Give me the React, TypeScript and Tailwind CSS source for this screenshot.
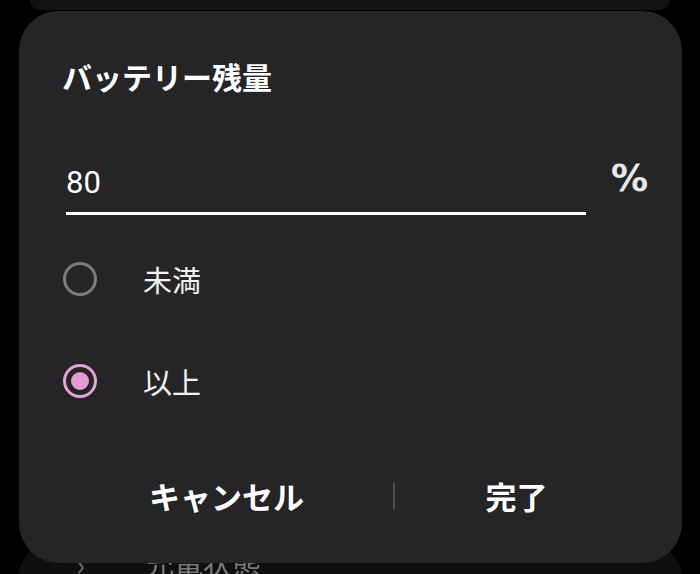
import React from "react";

const jp = { fontFamily: '"Noto Sans CJK JP", "Noto Sans", sans-serif' };

export default function App() {
  return (
    <div className="relative w-[700px] h-[574px] bg-black overflow-hidden" style={jp}>
      {/* background page content */}
      <div className="mx-[30px] h-[10px] rounded-b-[40px] bg-[#121212]" />
      <div className="mt-[530px] mx-[18px] h-[60px] rounded-t-[40px] bg-[#0f0f0f] flex items-start pl-[58px] pt-[8px] gap-[60px]">
        <span className="text-[#6b6b6b] text-[30px] leading-none">›</span>
        <span className="text-[#7a7a7a] text-[29px] leading-none">充電状態</span>
      </div>

      {/* dialog */}
      <div className="absolute left-[19px] top-[11px] w-[663px] h-[552px] rounded-[40px] bg-[#252527] flex flex-col pl-[44px] pr-[34px]">
        <div className="mt-[50px] -ml-[1px] text-white font-bold text-[30px] leading-none">
          バッテリー残量
        </div>

        <div className="mt-[76px] flex items-start">
          <div className="w-[522px] ml-[3px]">
            <div
              className="text-white text-[31px] leading-none pb-[14px]"
              style={{ fontFamily: 'Roboto, "Noto Sans", sans-serif' }}
            >
              80
            </div>
            <div className="h-[3px] bg-white" />
          </div>
          <div
            className="ml-[25px] -mt-[7px] text-[#e8e8e8] text-[37px] font-bold leading-none"
            style={{ fontFamily: '"DejaVu Sans", sans-serif' }}
          >
            %
          </div>
        </div>

        <div className="mt-[46px] flex items-center h-[36px]">
          <div className="w-[34px] h-[34px] rounded-full border-[3px] border-[#7c7c7c]" />
          <span className="ml-[46px] text-[#f2f2f2] text-[29px] leading-none">未満</span>
        </div>

        <div className="mt-[66px] flex items-center h-[36px]">
          <div className="w-[34px] h-[34px] rounded-full border-[3px] border-[#e6a2d9] flex items-center justify-center">
            <div className="w-[18px] h-[18px] rounded-full bg-[#e49ad4]" />
          </div>
          <span className="ml-[46px] text-[#f2f2f2] text-[29px] leading-none">以上</span>
        </div>

        <div className="mt-[81px] flex items-center -ml-[3px]">
          <div className="w-[333px] flex justify-center">
            <span className="text-white font-bold text-[31px] leading-none">キャンセル</span>
          </div>
          <div className="w-[2px] h-[28px] bg-[#4a4a4c]" />
          <div className="flex-1 flex justify-center pr-[10px]">
            <span className="text-white font-bold text-[31px] leading-none">完了</span>
          </div>
        </div>
      </div>
    </div>
  );
}
